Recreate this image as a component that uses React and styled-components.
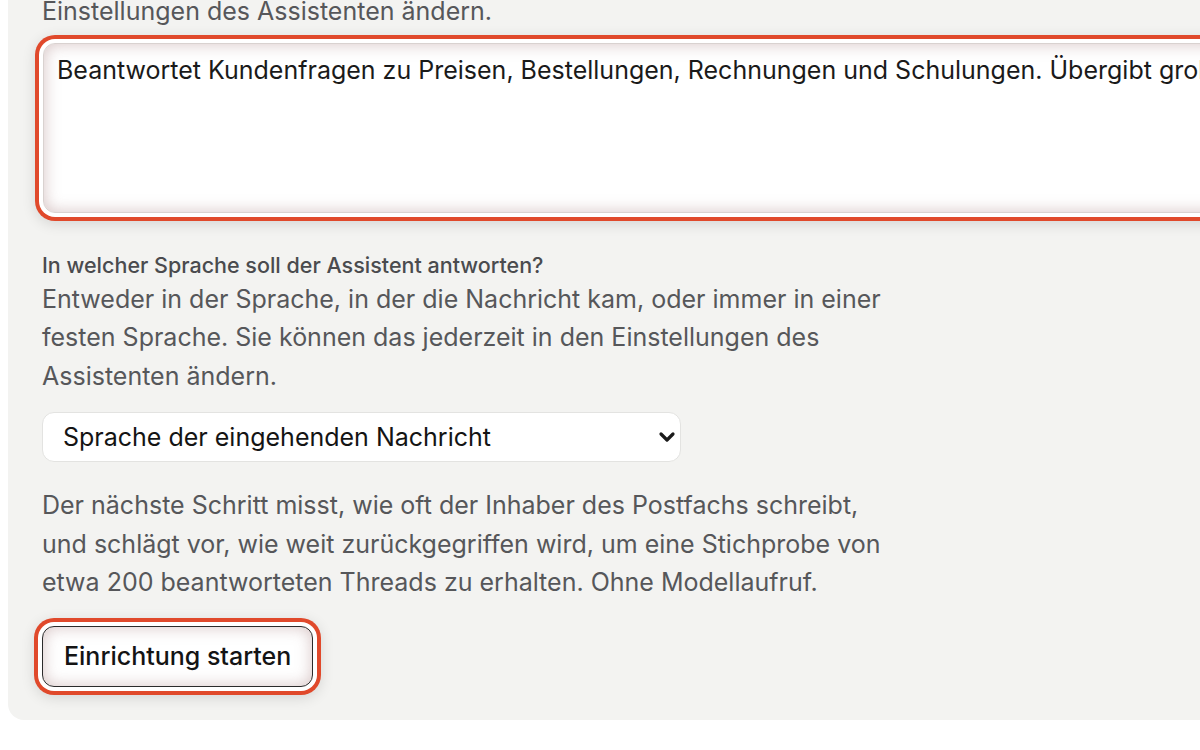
import React from 'react';
import styled, { createGlobalStyle, css } from 'styled-components';
import { ChevronDown } from 'lucide-react';

const GlobalStyle = createGlobalStyle`
  html, body {
    margin: 0;
    padding: 0;
    background: #ffffff;
    overflow: hidden;
  }
  body {
    font-family: Inter, "Noto Sans", sans-serif;
    color: #1c1c1c;
  }
`;

// the red focus ring drawn round the element that the tour points at
const highlight = css`
  box-shadow:
    inset 0 0 16px rgba(140, 90, 90, 0.36),
    0 0 0 4px #ffffff,
    0 0 0 8px #e0492b,
    0 3px 14px 8px rgba(0, 0, 0, 0.12);
`;

const Panel = styled.section`
  margin-left: 8px;
  width: 1700px;
  background: #f3f3f1;
  border-bottom-left-radius: 16px;
  padding: 0 34px 33px 34px;
  box-sizing: border-box;
`;

const Text = styled.p`
  margin: ${(p) => p.$margin || '0'};
  max-width: 850px;
  font-size: 25px;
  line-height: 38.5px;
  color: #56575a;
`;

const Description = styled.textarea`
  display: block;
  width: 1600px;
  height: 170px;
  margin: 12px 0 0 1px;
  padding: 8px 13px;
  box-sizing: border-box;
  border: 1px solid #d9d2d0;
  border-radius: 12px;
  background: #ffffff;
  font-family: Inter, "Noto Sans", sans-serif;
  font-size: 25px;
  line-height: 1.5;
  color: #1a1a1a;
  resize: none;
  outline: none;
  ${(p) => p.$highlighted && highlight}
`;

const Label = styled.label`
  display: block;
  margin-top: 37px;
  font-size: 21.5px;
  line-height: 1.4;
  font-weight: 500;
  color: #4a4b4e;
`;

const SelectWrap = styled.div`
  position: relative;
  width: 639px;
  margin-top: 17px;
`;

const Select = styled.select`
  display: block;
  width: 100%;
  height: 50px;
  padding: 0 44px 0 20px;
  border: 1px solid #e3e3e1;
  border-radius: 12px;
  background: #ffffff;
  font-family: Inter, "Noto Sans", sans-serif;
  font-size: 25px;
  color: #141414;
  outline: none;
  appearance: none;
`;

const Chevron = styled(ChevronDown)`
  position: absolute;
  right: 2px;
  top: 50%;
  transform: translateY(-50%);
  color: #1a1a1a;
  pointer-events: none;
`;

const Button = styled.button`
  display: block;
  margin-top: 24px;
  height: 61px;
  padding: 0 21px;
  border: 1px solid #2b2b2b;
  border-radius: 12px;
  background: #ffffff;
  font-family: Inter, "Noto Sans", sans-serif;
  font-size: 25px;
  font-weight: 500;
  color: #141414;
  cursor: pointer;
  ${(p) => p.$highlighted && highlight}
`;

export default function App() {
  return (
    <>
      <GlobalStyle />
      <Panel>
        <Text $margin="-8px 0 0 0">Einstellungen des Assistenten ändern.</Text>
        <Description
          $highlighted
          defaultValue="Beantwortet Kundenfragen zu Preisen, Bestellungen, Rechnungen und Schulungen. Übergibt grobe Anfragen an das Team."
        />
        <Label htmlFor="lang">In welcher Sprache soll der Assistent antworten?</Label>
        <Text>
          Entweder in der Sprache, in der die Nachricht kam, oder immer in einer
          festen Sprache. Sie können das jederzeit in den Einstellungen des
          Assistenten ändern.
        </Text>
        <SelectWrap>
          <Select id="lang" defaultValue="incoming">
            <option value="incoming">Sprache der eingehenden Nachricht</option>
            <option value="fixed">Feste Sprache</option>
          </Select>
          <Chevron size={24} strokeWidth={3.2} />
        </SelectWrap>
        <Text $margin="24px 0 0 0">
          Der nächste Schritt misst, wie oft der Inhaber des Postfachs schreibt,
          und schlägt vor, wie weit zurückgegriffen wird, um eine Stichprobe von
          etwa 200 beantworteten Threads zu erhalten. Ohne Modellaufruf.
        </Text>
        <Button $highlighted>Einrichtung starten</Button>
      </Panel>
    </>
  );
}
